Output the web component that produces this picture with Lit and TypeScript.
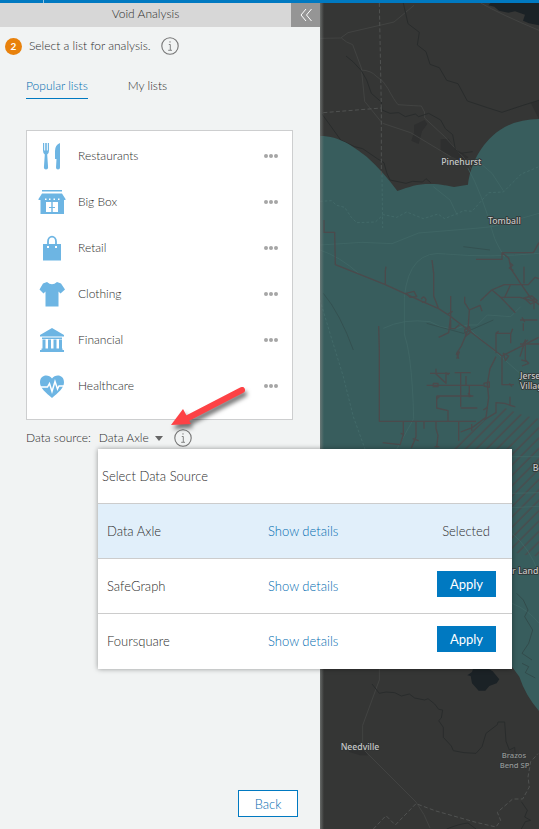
import { LitElement, html, svg, css } from "lit";
import { customElement, property, state } from "lit/decorators.js";
import { classMap } from "lit/directives/class-map.js";

const icons: Record<string, unknown> = {
  Restaurants: svg`<path d="M5 1h1.200v7.500h1V1h1.600v7.500h1V1H11v7.500Q11 11.500 9.200 12.500l.9 13q0 2-2.100 2t-2.100-2l.9-13Q5 11.500 5 8.500zM22 1v24.500q0 2-2 2t-2-2L18.500 17H17V9q0-6 5-8z"/>`,
  "Big Box": svg`<path fill-rule="evenodd" d="M4 2h20v1.500H4zM4 5.500h20l3.500 5.500v1H26v14H2.500V12H.5v-1zM8 14v10h5.300v-4H11v-1h2.300v-5zM14.700 14v5H17v1h-2.300v4H20V14zM7 10.500v1.500h1.500v-1.500zM11 10.500v1.500h1.500v-1.500zM15.500 10.500v1.500H17v-1.500zM20 10.500v1.500h1.500v-1.500z"/>`,
  Retail: svg`<path fill-rule="evenodd" d="M5 10h18v16.500H5zM9 12v2h2v-2zM17 12v2h2v-2z"/><path d="M10 12V7.500a4 4.800 0 0 1 8 0V12" fill="none" stroke="currentColor" stroke-width="1.800"/>`,
  Clothing: svg`<path d="M9 2q5 4.500 10 0l4 1.500 4 6-4.500 4-2-2V26.500H7.500V11.500l-2 2L1.500 9.500 5 3.500z"/>`,
  Financial: svg`<path d="M14 2l12 7v1.500H2V9zM4 11.500h20v1.500H4zM4.500 13.500h3v9h-3zM10 13.500h3v9h-3zM15.500 13.500h3v9h-3zM21 13.500h3v9h-3zM3.500 22.500h21v1.500h1.500v2H2v-2h1.500z"/>`,
  Healthcare: svg`<path d="M14 26C8 21 2 16 2 10.500 2 2 11 2 14 6.500 17 2 26 2 26 10.500 26 16 20 21 14 26z"/><path d="M3 15h6.500l2-3.500 2.500 8 3-10 2.500 7.500 1.500-3h6" fill="none" stroke="#fff" stroke-width="1.500"/>`,
};

@customElement("info-button")
class InfoButton extends LitElement {
  @property() label = "Information";
  static styles = css`
    :host { display: block; line-height: 0; }
    .info { border: 0; padding: 0; background: none; color: #757575; display: block; cursor: pointer; }
    .glyph { width: 18px; height: 18px; display: block; }
  `;
  render() {
    return html`<button class="info" aria-label=${this.label}>
      <svg class="glyph" viewBox="0 0 18 18" fill="none" stroke="currentColor">
        <circle cx="9" cy="9" r="8.200" stroke-width="1.100" />
        <path d="M7.800 7.500h1.500v5.500M7.200 13.300h3.800" stroke-width=".9" />
        <circle cx="9" cy="4.900" r=".7" fill="currentColor" stroke="none" />
      </svg>
    </button>`;
  }
}

@customElement("area-map")
class AreaMap extends LitElement {
  static styles = css`
    :host { display: block; position: relative; overflow: hidden; background: #353635; }
    .map { position: absolute; inset: 0; width: 100%; height: 100%; }
    .edge { position: absolute; inset: 0 auto 0 0; width: 4px; background: linear-gradient(to right, #808482aa, #80848200); }
    .line { fill: none; stroke-width: 3; stroke-linejoin: round; }
    .stream { stroke: #292c2c; }
    .road { stroke: #484a49; stroke-width: 2; }
    .county { stroke: #505251; stroke-dasharray: 12 7; }
    .faint { stroke: #426a68; stroke-width: 2; }
    .dash { stroke: #47706e; stroke-dasharray: 8 6; stroke-width: 2; }
    .limit { stroke: #4b4a4c; stroke-width: 4; }
    .water { fill: #1b2226; }
    .patch { fill: #2e2f2f; }
    .covered { fill: #385d5d; }
    .name { font: 500 26px "Noto Sans", sans-serif; fill: #c6c8c7; stroke: #303333; stroke-width: 5; paint-order: stroke; stroke-linejoin: round; }
    .park { fill: #949796; font-size: 23px; }
    .end { text-anchor: end; }
  `;
  render() {
    return html`<svg class="map" viewBox="0 9 657 2478" preserveAspectRatio="xMinYMin slice" role="img" aria-label="Analysis area map">
        <defs>
          <pattern id="hatch" width="22" height="22" patternUnits="userSpaceOnUse" patternTransform="rotate(45)">
            <path d="M3 0V22" stroke="#4b4a4c" stroke-width="4" />
          </pattern>
        </defs>
        <path class="patch" d="M282 375l32-15 8 12-16 22-10 38-22-10 8-24zM362 418l24-2 20 30 40 26-20 12-64-30zM632 308l25-8v58z" />
        <path class="water" d="M512 9H657V76l-30-6-18-8 6-18-30-10-20 4-28-6-14-12-18-4z" />
        <path class="line road" d="M0 115l62-1 22-16 138-32 60-50M64 114l16 12 18 8 26 70 10 100 50 62M124 210q30 2 44 18 24 14 36 38 18 34 30 48 60 4 70 4 14 18 10 36l60 56 60 66 20 32M188 370l84 28 120 72M482 9q60 34 175 82" />
        <path class="line stream" d="M250 9l14 62 34 26-6 38 26 20 12 38 28 10 22 38 34 10 28 52 60 20 44 14 66-22 45-14M78 168l22 18 24 26 16 28 14 40 30 26 2 24 24 10 26-2 20 12 30-8 10 8 30-10 36 20 14 26 22 18 8 44 16 12 36-5M6 342l26 36 30 42 42 20 24 6 44 30 20 12 8 30 10 22 48 10 20-6 30 2 10-10 14 12" />
        <path class="covered" d="M0 408C60 408 100 440 140 470Q190 515 232 573C270 560 290 552 330 552 370 552 380 558 402 561L444 554C450 500 480 430 540 390Q590 357 657 357V2133Q616 2085 598 2030L576 2000 0 1500z" />
        <path class="line county" d="M178 9l6 315M10 338l174-14M184 324v200" />
        <path class="line dash" d="M186 524l2 160M0 604l34-2 16 14 24 6 20 30 16 16 56-2 24-22 40 8 30-16 50 20 44-14 20 14 58-24 24 2 50-56 44-2 54-54 53-22M0 900l30 100 40 130 30 120 36 100" />
        <path class="line faint" d="M340 560l50 40 22 46M444 505q40 70 75 195 8 30 35 70M470 480l46 40 34 52M0 735l126-8 90 4 80-32 170-14 50-5 141-40M0 750q60 20 118 72M657 760q-150 14-280 2-110-16-124 130v110q10 30 16 74 10 80 12 180l-50 90M190 985q60-30 140-20 60 36 112 10l30 0 30-30 70 5 30-30M440 980l160 140" />
        <path class="line stream" opacity=".25" d="M10 880q50 60 90 170M430 740l80 10M320 970l110 30 90-40" />
        <g transform="translate(0 660)">
          <path d="M380 690L520 580l30-18 60 24 47 10v430q-10-30-40-20l-41-10V690z" fill="url(#hatch)" />
          <path class="line limit" d="M12 0v37h32l2 97 150 60 110 50 50 22 34 22 156 120 110-56M196 194v-42l2-12M336 120l5 40v68l14 36M392 228v60l-6 50-30 14M434 230v18l14 22-4 60M448 270l32-14 6 18M444 330l-20 48-14 22 6 16M468 118h78V98h94l17-30M546 98l20 16 8 34 26 40 32 46 25 20M657 176l-12-4-20 22-72 0-38 16-34 32M516 210l26 22 44 46M540 232h60l42 12M553 234l18-38M612 140v50M642 234v34M600 300h52M610 310v22M528 400v-60h44v30M572 342l6-16M600 410l16-50v60l10 10-20 8M600 372h57M176 318l2 72v214h290M330 460h60M348 446v16l30 28v-32M320 496h170M422 460v100M404 458h48M438 468v28M448 496v36M350 528h110M350 528v36l34 8v32M422 564h50M546 408v86h36M528 410l-18 36-8 46 4 40-8 60-40 30-36 14M570 530v26l14 4-30-10-26-2v30l-36 22M250 604v40l-10 30-52-6M288 606v44l-14 34M348 606v20l6 20-4 36M416 606v56M312 606v20M455 612v20" />
          <path class="line limit" d="M570 128l8 8-10 8 12 8M612 234l24-6 16 14-20 10zM384 282l14-8M392 300v26h12l14-12M434 330l14-10 4 16-14 12zM408 404l10-8-8 20M528 340l8-6M550 400l16 8-10 14zM340 490h14v10h-14zM376 458l10 6M350 536l8-6M444 520l10 10M492 490l16-4v16l-16-4zM490 570l12-8M258 220l24-6 8 16-20 2zM304 238q6-14 14 0 0 12-12 8M606 292l8 14M624 360l-14 10M620 424l-16-4M568 490l8 10M242 640l10 4M278 656l18 6M344 680h14" />
        </g>
        <path class="line faint" d="M576 1370h81M576 1480l81-2M576 1523l81-4M576 1810q50 20 81 60M576 1600q50 40 81 120" />
        <path class="line stream" opacity=".35" d="M590 1780l20 20 14 30-10 20 24 40-12 40-20 30 30 20M606 1990l20 10-10 18 30 16" />
        <g transform="translate(0 1980)">
          <path class="water" d="M442 46l14-10 4-12h42l16 10 20 24-8 12-22 8-12 14-20 0-20-22-4-22z" />
          <path class="patch" d="M86 268l18-24 20 12 20 30-24 0-32-10z" />
          <path class="line road" d="M178 24v36l-50 136v70l160 160 24 38 18 40" />
          <path class="line stream" d="M156 72l22 28 20-4 26 2 20 10 24-6 16 12 30 6 10-4 20 16 12 16 12 2-4 24-8 8 14 20 0 30 24 26 6 14 32 6 36 2 18-20 12-40 34-26 2-8h20l4 58 10 26 16-8 2 28" />
          <path class="line county" d="M160 507l38-40 28 28 62-64 60 22 120 34 60 14 14-20-10-24 46-40h30l20-36-4-30 8-46 22-24" />
          <path class="line stream" stroke-width="5" d="M604 425l18 26-8 20 18 10-16 4-12 22" />
          <path class="line stream" d="M380 507q40-16 64-18l24 18" />
        </g>
        <text class="name" x="364" y="495">Pinehurst</text>
        <text class="name" x="504" y="671">Tomball</text>
        <text class="name" x="600" y="1136">Jersey</text>
        <text class="name" x="600" y="1167">Village</text>
        <text class="name" x="638" y="1414">Bellaire</text>
        <text class="name end" x="655" y="1721">gar Land</text>
        <text class="name" x="62" y="2249">Needville</text>
        <text class="name park" x="545" y="2275">Brazos</text>
        <text class="name park" x="539" y="2303">Bend SP</text>
      </svg>
      <div class="edge"></div>`;
  }
}

@customElement("app-root")
class AppRoot extends LitElement {
  @state() private source = "Data Axle";
  @state() private tab = "Popular lists";

  static styles = css`
    :host { display: flex; flex-direction: column; min-height: 100vh; font: 300 12px/18px Lato, "Open Sans", sans-serif; color: #2c2c2c; background: #f1f3f3; }
    * { box-sizing: border-box; }
    button { font: inherit; color: inherit; border: 0; padding: 0; background: none; cursor: pointer; }
    a { color: #006bb0; text-decoration: none; }
    .topbar { height: 3px; background: #0079c1; display: flex; }
    .mark { width: 1px; margin-left: 43px; background: #8fc4e4; }
    .body { flex: 1; display: grid; grid-template-columns: 320px 1fr; }
    .panel { position: relative; z-index: 1; display: flex; flex-direction: column; padding-bottom: 12px; min-width: 0; }
    .head { display: flex; height: 24px; background: #d7d7d7; }
    .title { flex: 1; margin: 0; font: inherit; line-height: 22px; text-align: center; }
    .fold { width: 29px; background: #959595; color: #fff; display: grid; place-items: center; }
    .chevrons { width: 14px; height: 14px; }
    .step { display: flex; align-items: center; height: 38px; padding-left: 5px; }
    .num { width: 17px; height: 17px; border-radius: 50%; background: #e8810c; color: #fff; font-size: 10px; font-weight: 700; line-height: 17px; text-align: center; margin-right: 7px; }
    .step info-button { margin-left: 10px; }
    .tabs { display: flex; gap: 40px; padding: 12px 26px 0; }
    .tab { height: 22px; padding-bottom: 3px; border-bottom: 1px solid transparent; }
    .tab.on { color: #006bb0; border-color: #0079c1; }
    .lists { list-style: none; margin: 31px 27px 0 26px; padding: 2px 0 10px; background: #fff; border: 1px solid #cdcecf; }
    .item { display: flex; align-items: center; height: 46px; padding: 0 14px 0 11px; }
    .pic { width: 28px; height: 28px; margin-right: 12px; fill: currentColor; color: #6db5e3; }
    .label { flex: 1; }
    .more { display: flex; gap: 1px; height: 18px; align-items: center; color: #a6a6a6; }
    .dot { width: 4px; height: 4px; border-radius: 50%; background: currentColor; }
    .source { position: relative; display: flex; align-items: center; height: 18px; margin: 9px 0 0 26px; }
    .pick { display: flex; align-items: center; margin: 0 11px 0 8px; }
    .caret { margin-left: 6px; border: 4px solid transparent; border-top: 5px solid #666; border-bottom: 0; }
    .popup { position: absolute; left: 72px; top: 20px; width: 414px; background: #fff; box-shadow: 0 0 5px #0006; font-size: 13px; }
    .table { width: 100%; border-collapse: collapse; table-layout: fixed; }
    .table caption { height: 54px; line-height: 54px; text-align: left; padding-left: 4px; }
    .row { height: 55px; border-top: 1px solid #ccc; }
    .row.chosen { background: #e1effa; }
    .cell { padding: 0 0 0 9px; text-align: left; font-weight: inherit; }
    .detail { padding: 0; }
    .act { padding: 0 16px 0 0; text-align: right; }
    .state { padding-right: 6px; }
    .apply { width: 59px; height: 26px; background: #0079c1; color: #fff; font-weight: 400; display: block; margin: 0 0 4px auto; }
    .arrow { position: absolute; left: 134px; top: -59px; width: 90px; height: 66px; overflow: visible; pointer-events: none; filter: drop-shadow(2px 4px 2px #0008); }
    .foot { margin-top: auto; display: flex; justify-content: flex-end; padding-right: 22px; }
    .back { width: 60px; height: 27px; border: 1px solid #0079c1; background: #fff; color: #006bb0; font-size: 13px; }
  `;

  render() {
    return html`
      <div class="topbar"><span class="mark"></span></div>
      <div class="body">
        <section class="panel">
          <header class="head">
            <h1 class="title">Void Analysis</h1>
            <button class="fold" aria-label="Collapse panel">
              <svg class="chevrons" viewBox="0 0 14 14" fill="none" stroke="currentColor"><path d="M7 1L2 7l5 6M12.500 1l-5 6 5 6" /></svg>
            </button>
          </header>
          <div class="step">
            <span class="num">2</span><span>Select a list for analysis.</span>
            <info-button label="About lists"></info-button>
          </div>
          <nav class="tabs">
            ${["Popular lists", "My lists"].map(
              (t) => html`<button class=${classMap({ tab: true, on: t === this.tab })} @click=${() => (this.tab = t)}>${t}</button>`
            )}
          </nav>
          <ul class="lists">
            ${Object.keys(icons).map(
              (name) => html`<li class="item">
                <svg class="pic" viewBox="0 0 28 28" aria-hidden="true">${icons[name]}</svg>
                <span class="label">${name}</span>
                <button class="more" aria-label="Options for ${name}"><i class="dot"></i><i class="dot"></i><i class="dot"></i></button>
              </li>`
            )}
          </ul>
          <div class="source">
            <span id="source-label">Data source:</span>
            <button class="pick" aria-haspopup="true" aria-expanded="true" aria-describedby="source-label">${this.source}<i class="caret"></i></button>
            <info-button label="About data sources"></info-button>
            <div class="popup">
              <table class="table">
                <caption>Select Data Source</caption>
                <colgroup><col width="170" /><col width="120" /><col /></colgroup>
                <tbody>
                  ${["Data Axle", "SafeGraph", "Foursquare"].map(
                    (s) => html`<tr class=${classMap({ row: true, chosen: s === this.source })}>
                      <th class="cell" scope="row">${s}</th>
                      <td class="detail"><a href="#details">Show details</a></td>
                      <td class="act">
                        ${s === this.source
                          ? html`<span class="state">Selected</span>`
                          : html`<button class="apply" @click=${() => (this.source = s)}>Apply</button>`}
                      </td>
                    </tr>`
                  )}
                </tbody>
              </table>
            </div>
            <svg class="arrow" viewBox="0 0 90 66" aria-hidden="true">
              <path d="M82 20L26 49" stroke="#fd4245" stroke-width="6" stroke-linecap="round" />
              <path d="M11 55L23 39l8 15z" fill="#fd4245" />
            </svg>
          </div>
          <footer class="foot"><button class="back">Back</button></footer>
        </section>
        <area-map></area-map>
      </div>
    `;
  }
}
